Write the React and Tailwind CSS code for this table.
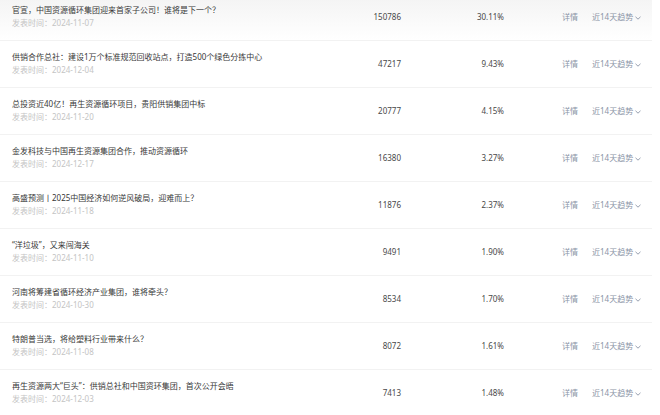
const ROWS = [
  { title: '官宣，中国资源循环集团迎来首家子公司！谁将是下一个？', date: '2024-11-07', count: 150786, pct: '30.11%' },
  { title: '供销合作总社：建设1万个标准规范回收站点，打造500个绿色分拣中心', date: '2024-12-04', count: 47217, pct: '9.43%' },
  { title: '总投资近40亿！再生资源循环项目，贵阳供销集团中标', date: '2024-11-20', count: 20777, pct: '4.15%' },
  { title: '金发科技与中国再生资源集团合作，推动资源循环', date: '2024-12-17', count: 16380, pct: '3.27%' },
  { title: '高盛预测丨2025中国经济如何逆风破局，迎难而上？', date: '2024-11-18', count: 11876, pct: '2.37%' },
  { title: '“洋垃圾”，又来闯海关', date: '2024-11-10', count: 9491, pct: '1.90%' },
  { title: '河南将筹建省循环经济产业集团，谁将牵头？', date: '2024-10-30', count: 8534, pct: '1.70%' },
  { title: '特朗普当选，将给塑料行业带来什么？', date: '2024-11-08', count: 8072, pct: '1.61%' },
  { title: '再生资源两大“巨头”：供销总社和中国资环集团，首次公开会晤', date: '2024-12-03', count: 7413, pct: '1.48%' },
];

function Chevron() {
  return (
    <svg width="6" height="4" viewBox="0 0 6 4" className="ml-[2px] mt-[1px]">
      <polyline points="0.5,0.8 3,3.2 5.5,0.8" fill="none" stroke="#8a94a6" strokeWidth="0.9" />
    </svg>
  );
}

export default function App() {
  return (
    <div
      className="w-[660px] h-[415px] overflow-hidden bg-white text-[8px]"
      style={{ fontFamily: '"Noto Sans", "Noto Sans CJK SC", sans-serif' }}
    >
      <div className="-mt-[6px] w-[652px]">
        {ROWS.map((row, i) => (
          <div
            key={i}
            className={`flex h-[47px] border-b border-[#f2f2f2] pl-3 ${i === 0 ? 'bg-gradient-to-b from-[#f3f3f3] to-white' : ''}`}
          >
            <div className="flex-1 min-w-0 pt-[10px]">
              <p className="leading-[12px] text-[#383838] whitespace-nowrap">{row.title}</p>
              <p className="leading-[13px] text-[#c4c4c4]">发表时间：{row.date}</p>
            </div>
            <div className="w-[83px] flex items-center justify-end text-[#484848]">{row.count}</div>
            <div className="w-[103px] flex items-center justify-end text-[#484848]">{row.pct}</div>
            <div className="ml-[58px] flex items-center text-[#8a94a6]">详情</div>
            <div className="ml-[14px] w-[60px] flex items-center text-[#8a94a6]">
              近14天趋势
              <Chevron />
            </div>
          </div>
        ))}
      </div>
    </div>
  );
}
